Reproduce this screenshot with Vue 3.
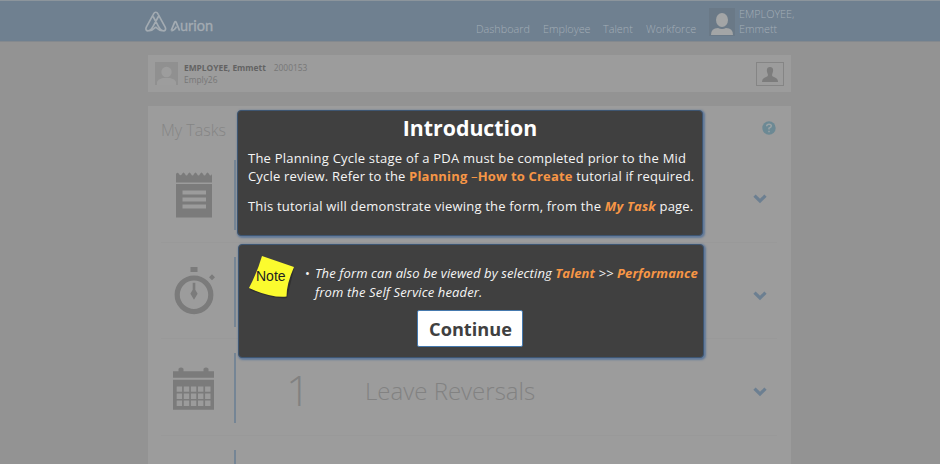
<script setup>
const nav = ['Dashboard', 'Employee', 'Talent', 'Workforce']
const tasks = [
  { icon: 'note', count: '', label: '' },
  { icon: 'timer', count: '', label: '' },
  { icon: 'calendar', count: '1', label: 'Leave Reversals' },
  { icon: '', count: '', label: '' },
]
</script>

<template>
  <div class="page">
    <header class="header">
      <div class="brand">
        <svg class="mark" width="22" height="23" viewBox="0.5 0 22.5 23">
          <path d="M11.5 2 C10 2 9.6 3 9 4.2 L2 17 C0.6 19.8 2 21.2 4 21 C7 20.6 8 18 9.6 15 L14.2 6.4 M11.5 2 C13 2 13.4 3 14 4.2 L21 17 C22.4 19.8 21 21.2 19 21 C16 20.6 15 18 13.4 15 L8.8 6.4 M5 21 C9 21 10 17.5 11.5 17.5 C13 17.5 14 21 18 21" />
        </svg>
        <svg class="letter" width="11" height="12" viewBox="0 0 11 12"><path d="M1.2 10.6 L4.6 2.4 Q5.4 .6 6.2 2.4 L9.6 10.6 M1.2 10.6 Q4.5 10.6 6.4 6.6" /></svg>
        <span class="word">urion</span>
      </div>
      <nav class="nav">
        <span v-for="n in nav" :key="n" :class="['link', n.toLowerCase()]">{{ n }}</span>
      </nav>
      <svg class="avatar" width="26" height="28" viewBox="0 0 26 28">
        <rect width="26" height="28" fill="#6a7987" />
        <ellipse cx="13" cy="12" rx="6" ry="7" fill="#a3a5a6" />
        <path d="M2 27 Q2 20 9 20 Q13 22 17 20 Q24 20 24 27Z" fill="#a3a5a6" />
      </svg>
      <div class="user">EMPLOYEE,<br />Emmett</div>
    </header>

    <main class="content">
      <section class="card person">
        <svg width="23" height="23" viewBox="0 0 23 23">
          <rect width="23" height="23" fill="#909090" />
          <circle cx="11.5" cy="10" r="5.2" fill="#9d9d9d" />
          <path d="M2 23 V20 Q3 17 8 16 H15 Q20 17 21 20 V23Z" fill="#9d9d9d" />
        </svg>
        <div class="details">
          <div><b>EMPLOYEE, Emmett</b><span class="id">2000153</span></div>
          <div>Emply26</div>
        </div>
        <div class="badge">
          <svg width="16" height="15" viewBox="0 0 16 15">
            <path d="M8 0 C12 0 11.5 4.5 10.2 7 C9.6 9 10.5 9.5 13 10.5 Q16 11.5 16 15 H0 Q0 11.5 3 10.5 C5.500 9.500 6.400 9 5.800 7 C4.500 4.500 4 0 8 0Z" fill="#7c7c7c" />
          </svg>
        </div>
      </section>

      <section class="card tasks">
        <div class="tasks-head">
          <h2>My Tasks</h2>
          <svg width="14" height="14" viewBox="0 0 14 14">
            <circle cx="7" cy="7" r="6.700" fill="#6c8994" />
            <path d="M4.700 5.200 Q4.800 3.200 7 3.200 Q9.300 3.200 9.300 5 Q9.300 6.200 7 7.200 V8.500 M7 9.700 V11.200" fill="none" stroke="#9ba3a6" stroke-width="1.500" />
          </svg>
        </div>
        <div v-for="(t, i) in tasks" :key="i" class="row">
          <div class="icon">
            <svg v-if="t.icon === 'note'" width="42" height="50" viewBox="0 0 42 50">
              <path d="M3 4 q1.500 -2.500 3 0 t3 0 q1.500 -3 3 0 t3 0 q1.500 -3 3 0 t3 0 q1.500 -3 3 0 t3 0 q1.500 -3 3 0 t3 0 q1.500 -3 3 0 t3 0 V12.500 H3Z M3 14 H39 V47.500 H3Z" />
              <path d="M9.500 22.500 H33 M9.500 29.500 H33 M9.500 36.500 H33" class="cut" />
            </svg>
            <svg v-else-if="t.icon === 'timer'" width="42" height="50" viewBox="0 1.700 42 50">
              <circle cx="21" cy="29.500" r="16.800" fill="none" stroke="#7b7b7b" stroke-width="5.200" />
              <path d="M17.500 1.700 h7 v5 h-7Z M39 9 l3 3 -3 3 -3 -3Z M19.700 17.500 h2.600 v7 l2.300 4 -3.600 6 -3.600 -6 2.300 -4Z" />
            </svg>
            <svg v-else-if="t.icon === 'calendar'" width="42" height="50" viewBox="0 -0.700 42 50">
              <path d="M0 7.500 H5.500 V5 Q8 2.500 10.500 5 V7.500 H30.500 V5 Q33 2.500 35.500 5 V7.500 H41 V14 H0Z M0 16 H41 V46 H0Z" />
              <path v-for="y in [22.700, 29.800, 36.900]" :key="y" :d="`M3.700 ${y + 2.700} h5.400 m1.700 0 h5.400 m1.700 0 h5.400 m1.700 0 h5.400 m1.700 0 h5.400`" stroke="#9b9b9b" stroke-width="5.400" fill="none" />
            </svg>
          </div>
          <i class="bar"></i>
          <span class="count">{{ t.count }}</span>
          <span class="label">{{ t.label }}</span>
          <svg class="chevron" width="14" height="10" viewBox="0 0 14 10"><path d="M1.500 1.700 L7 7 L12.500 1.700" /></svg>
        </div>
      </section>
    </main>

    <section class="panel intro">
      <h1>Introduction</h1>
      <p class="l1">The Planning Cycle stage of a PDA must be completed prior to the Mid</p>
      <p class="l2">Cycle review. Refer to the <b>Planning <span class="dash">–</span>How to Create</b> tutorial if required.</p>
      <p class="l3">This tutorial will demonstrate viewing the form, from the <b><em>My Task</em></b> page.</p>
    </section>

    <section class="panel note">
      <div class="note-body">
        <svg width="48" height="46" viewBox="0 0 48 46">
          <path d="M14 3 L46 14 L39 43 Q27 45 2 35Z" fill="#292929" opacity=".7" />
          <path d="M14 1 L46 12 Q38.500 29 38.500 41.500 Q23 43 1 33 Q9 18 14 1Z" fill="#fbfb2e" />
          <text x="8" y="26">Note</text>
        </svg>
        <span class="bullet">•</span>
        <div class="tip">
          <p class="n1">The form can also be viewed by selecting <b>Talent</b> &gt;&gt; <b>Performance</b></p>
          <p class="n2">from the Self Service header.</p>
        </div>
      </div>
      <button>Continue</button>
    </section>
  </div>
</template>

<style>
body { margin: 0; overflow: hidden; }
</style>

<style scoped>
* { box-sizing: border-box; }
.page { position: relative; width: 940px; height: 464px; overflow: hidden; background: #939393; font-family: "Open Sans", sans-serif; }
.header { display: flex; height: 42px; padding-left: 145px; background: #6f8090; border-top: 1px solid #8c959c; border-bottom: 1px solid #84898e; color: #a3adb6; }
.brand { display: flex; width: 331px; padding-top: 9px; }
.mark, .letter { fill: none; stroke: #a3abb2; stroke-width: 1.700; flex: none; }
.letter { margin: 10px 0 0 3px; }
.word { font: 400 14.500px/20px Lato, sans-serif; margin: 6px 0 0 -1px; color: #a3abb2; -webkit-text-stroke: .3px #a3abb2; }
.nav { display: flex; width: 233px; padding-top: 20px; font-size: 10.800px; line-height: 16px; font-weight: 300; }
.link { white-space: nowrap; flex: none; }
.dashboard { width: 67px; }
.employee { width: 60px; }
.talent { width: 43px; }
.avatar { margin-top: 7px; flex: none; }
.user { margin: 5px 0 0 4px; font-size: 10.800px; line-height: 15px; font-weight: 300; }
.content { width: 643px; margin: 13px 0 0 148px; }
.card { background: #9c9c9c; }
.person { display: flex; height: 37px; padding: 7px 7px 0 7px; }
.details { margin-left: 6px; font-size: 8.400px; line-height: 12px; color: #777; flex: 1; }
.details b { color: #636363; font-weight: 700; }
.id { margin-left: 8px; }
.badge { display: flex; align-items: center; justify-content: center; width: 28px; height: 24px; border: 1px solid #858585; }
.tasks { height: 370px; margin-top: 14px; padding: 0 14px 0 13px; }
.tasks-head { display: flex; justify-content: space-between; height: 40px; padding: 15px 1px 0 0; }
h2 { margin: -3px 0 0; font-size: 16px; line-height: 24px; font-weight: 300; color: #858585; }
.row { display: flex; align-items: center; height: 96.700px; padding-top: 2px; border-bottom: 1px solid #999; }
.icon { width: 42px; height: 50px; margin-left: 12px; fill: #7b7b7b; flex: none; }
.cut { stroke: #9c9c9c; stroke-width: 4; }
.bar { width: 2px; height: 70px; margin-left: 19px; background: #758595; flex: none; }
.count { width: 129px; margin-top: 4px; padding-left: 50px; font-size: 43px; line-height: 60px; font-weight: 300; color: #818181; }
.label { flex: 1; margin-top: 6px; font-size: 24px; line-height: 36px; font-weight: 300; color: #828282; white-space: nowrap; }
.chevron { fill: none; stroke: #6c7f91; stroke-width: 3.200; margin: 8px 10px 0 0; }
.panel { position: absolute; background: #404040; border: 1px solid #3e5672; border-radius: 4px; color: #f5f5f5; box-shadow: 1px 1px 2px 1px #60799a; font-family: "Open Sans", sans-serif; }
.intro { left: 237px; top: 110px; width: 466px; height: 126px; padding: 3px 0 0 10px; }
.note { left: 238px; top: 244px; width: 466px; height: 114px; }
p { margin: 0; white-space: nowrap; font-size: 13px; line-height: 18px; }
.panel b { color: #f79646; }
.dash { font-weight: 400; }
h1 { margin: 0 0 8px; padding-right: 10px; text-align: center; font-size: 21.300px; line-height: 27px; font-weight: 700; color: #fff; }
.l1 { letter-spacing: .220px; }
.l2 { letter-spacing: .180px; }
.l3 { margin-top: 12px; letter-spacing: .200px; }
.note-body { display: flex; padding: 10px 0 0 9px; height: 65px; }
.note-body svg { flex: none; }
.note-body text { font: 14px "Liberation Sans", sans-serif; fill: #222; }
.bullet { margin: 9px 0 0 9px; width: 10px; font-size: 13px; line-height: 18px; }
.tip { padding-top: 9px; font-style: italic; }
.tip p { line-height: 19px; }
.n1 { letter-spacing: .115px; }
.n2 { letter-spacing: .140px; }
button { display: block; width: 106px; height: 37px; margin: 0 0 0 178px; padding: 1px 0 0 1px; background: #fff; border: 1px solid #4579ae; border-radius: 2px; color: #404040; font: 700 18.200px/34px "Open Sans", sans-serif; }
</style>
